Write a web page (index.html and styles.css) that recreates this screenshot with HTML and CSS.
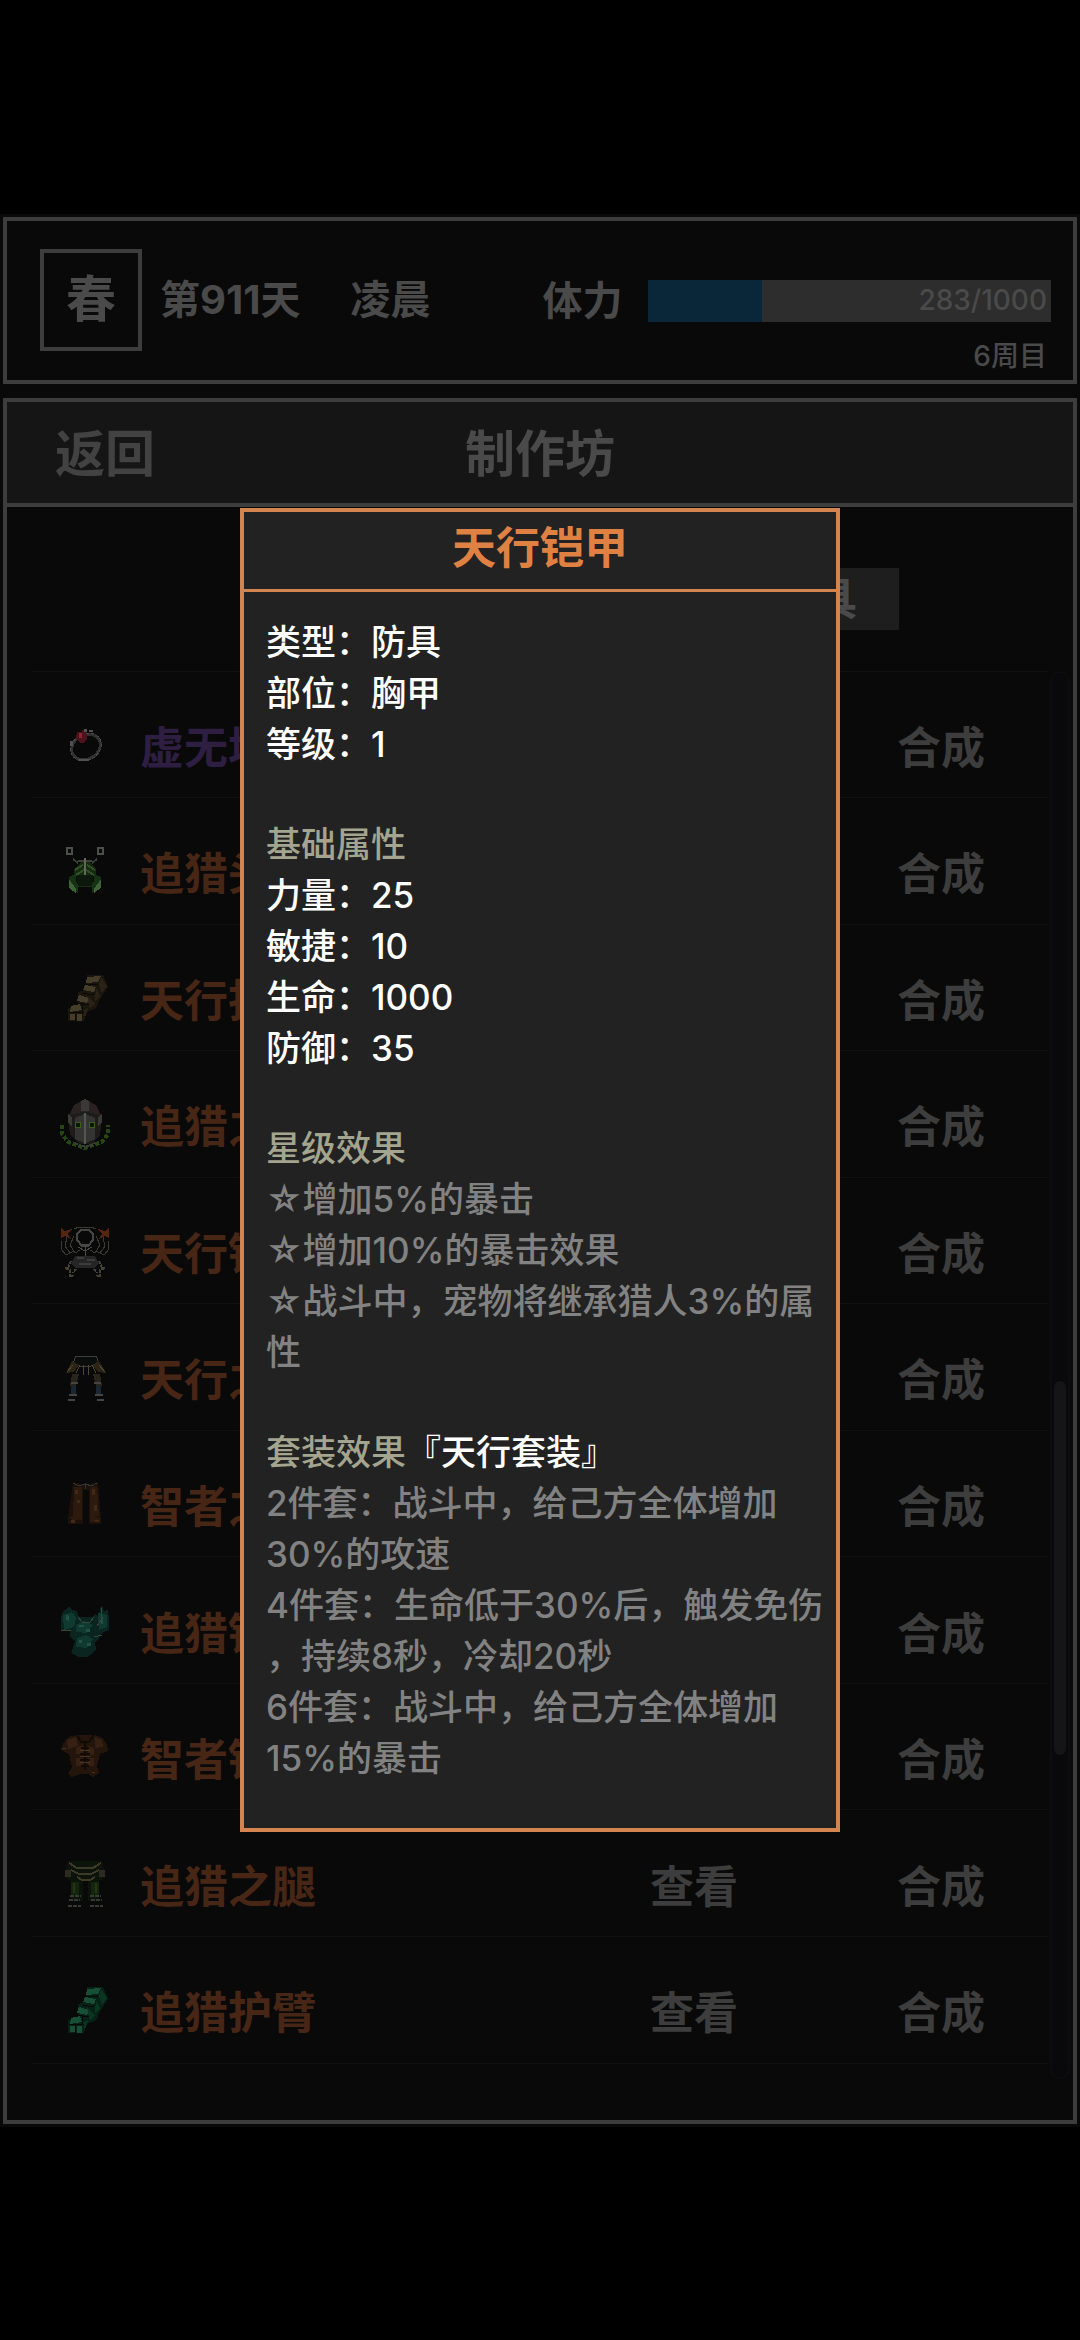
FILE: index.html
```html
<!DOCTYPE html>
<html lang="zh-CN">

<head>
    <meta charset="UTF-8">
    <meta name="viewport" content="width=device-width, initial-scale=1.0">
    <title>制作坊</title>
    <link rel="stylesheet" href="styles.css">
</head>

<body>
    <div class="stage">
        <header class="panel status">
            <div class="season">春</div>
            <div class="day">第911天</div>
            <div class="time">凌晨</div>
            <div class="stamina">
                <span class="stamina-label" id="staminaLabel">体力</span>
                <div class="bar" role="progressbar" aria-labelledby="staminaLabel" aria-valuenow="283" aria-valuemax="1000">
                    <div class="bar-fill" style="width: 28.3%"></div>
                    <span class="bar-text">283/1000</span>
                </div>
                <span class="cycle">6周目</span>
            </div>
        </header>

        <main class="panel workshop">
            <div class="title-bar">
                <button class="back">返回</button>
                <h1>制作坊</h1>
            </div>
            <div class="tabs">
                <button class="tab">防具</button>
            </div>
            <div class="list-area">
                <ul class="items">
                    <li class="item">
                        <svg class="icon" viewBox="0 0 52 52">
                            <ellipse cx="27" cy="28" rx="15" ry="12" fill="none" stroke="#303030" stroke-width="3" transform="rotate(-30 27 28)" />
                            <ellipse cx="27" cy="28" rx="16" ry="13" fill="none" stroke="#4c4a4c" stroke-width="1" stroke-dasharray="3 2" transform="rotate(-30 27 28)" />
                            <path d="M18 13h5v-2h4v4h1v5l-3 4h-4l-4-5z" fill="#4d121c" />
                            <path d="M20 14h3v5h-3z" fill="#8a2434" />
                            <path d="M25 10h3v3h-3zM30 11h4v2h-4zM11 22h3v5h-3zM20 40h10v2H20z" fill="#525052" />
                        </svg>
                        <span class="name rare">虚无境界</span>
                        <button>查看</button>
                        <button>合成</button>
                    </li>
                    <li class="item">
                        <svg class="icon" viewBox="0 0 52 52">
                            <path d="M8 3h5v6H8zM39 3h5v6h-5z" fill="#080a08" stroke="#4c504c" stroke-width="2" />
                            <path d="M14 14l5 4M38 14l-5 4M19 16h14" stroke="#3a403a" stroke-width="2" fill="none" />
                            <path d="M15 24l7-7h8l7 7v7H15z" fill="#152b12" />
                            <path d="M16 25l8-5M17 30l8-5M36 25l-8-5M35 30l-8-5" stroke="#315026" stroke-width="2" />
                            <path d="M25 13h2v20h-2z" fill="#626958" />
                            <path d="M10 32l7-3v7l3 5h12l3-5v-7l7 3v10l-9 6v-6H19v6l-9-6z" fill="#153214" />
                            <path d="M10 34l7 10v4l-7-5zM42 34l-7 10v4l7-5z" fill="#406238" />
                            <path d="M18 30h16v7l-3 4H21l-3-4z" fill="#0c180b" />
                        </svg>
                        <span class="name">追猎头饰</span>
                        <button>查看</button>
                        <button>合成</button>
                    </li>
                    <li class="item">
                        <svg class="icon" viewBox="0 0 52 52">
                            <g class="arm-bone">
                                <path class="c1" d="M28 3h16l5 12-8 12-4 9-9 4-3 9H9V36l10-3V20l7-2z" />
                                <path class="c2" d="M28 5l14-1-3 6-12 1zM26 13l11 2-2 5-11-2zM20 23l10 3-2 5-10-2zM12 34l9-2 2 6-12 2zM11 42h5v6h-5zM18 42h5v7h-5z" />
                                <path class="c3" d="M42 5l6 9-5 7-3-9zM37 16l4 8-5 5zM28 24l8 7-5 6zM24 39l5-3-3 10z" />
                                <path class="c4" d="M26 12l13 1M23 21l12 2M18 31l12 2M10 40h15M16 42v7M23 32v8" />
                            </g>
                        </svg>
                        <span class="name">天行护臂</span>
                        <button>查看</button>
                        <button>合成</button>
                    </li>
                    <li class="item">
                        <svg class="icon" viewBox="0 0 52 52">
                            <path d="M3 27v9l6 8 17 6 17-6 6-8v-9" fill="none" stroke="#264510" stroke-width="4" stroke-dasharray="4 2" />
                            <path d="M15 7l11-6 11 6 6 12-2 18-9 9H20l-9-9L9 19z" fill="#1d1c1b" />
                            <path d="M15 7l11-6 11 6 4 10-12-3h-6l-12 3z" fill="#2a2220" />
                            <path d="M22 3l4-2 4 2v10h-8z" fill="#3a3938" />
                            <path d="M9 15l4 5v9l-4-5zM43 15l-4 5v9l4-5z" fill="#3a3a38" />
                            <path d="M16 20l9-4v29l-9-4zM27 16l9 4v21l-9 4z" fill="#343433" />
                            <path d="M26 15v31" stroke="#555552" stroke-width="2" />
                            <circle cx="19" cy="27" r="3" fill="#0b1804" stroke="#3c5f11" stroke-width="1" />
                            <circle cx="33" cy="27" r="3" fill="#0b1804" stroke="#3c5f11" stroke-width="1" />
                            <path d="M16 45l5 3h10l5-3" fill="none" stroke="#3c3c3c" stroke-width="2" stroke-dasharray="3 1" />
                        </svg>
                        <span class="name">追猎之盔</span>
                        <button>查看</button>
                        <button>合成</button>
                    </li>
                    <li class="item">
                        <svg class="icon" viewBox="0 0 52 52">
                            <path d="M2 3l4 3 7-2-4 5 3 5-6-3-4 2zM50 3l-4 3-7-2 4 5-3 5 6-3 4 2z" fill="#55260d" />
                            <path d="M18 9l4-4h8l4 4v6l-5 6h-6l-5-6z" fill="none" stroke="#464644" stroke-width="2" />
                            <path d="M15 4l5-2h12l5 2M3 16l-1 8 5 6 4-2M8 12l-2 9 5 7 4-2M15 11l-4 9 5 8 5-3M49 16l1 8-5 6-4-2M44 12l2 9-5 7-4-2M37 11l4 9-5 8-5-3" fill="none" stroke="#3a3a34" stroke-width="1" />
                            <path d="M19 22l7 4 7-4M22 19h8M26 20v11" fill="none" stroke="#4a4a47" stroke-width="1" />
                            <path d="M16 31h20l4 8-5 4H17l-5-4z" fill="#252525" />
                            <path d="M18 32h7v2h-7zM28 34h8v2h-8zM20 38h12v2H20z" fill="#3c3c3c" />
                            <path d="M12 36l-3 7H6l5 2v7l4-2M40 36l3 7h3l-5 2v7l-4-2M17 44l-3 4M35 44l3 4" fill="none" stroke="#434233" stroke-width="2" stroke-dasharray="3 1" />
                        </svg>
                        <span class="name">天行铠甲</span>
                        <button>查看</button>
                        <button>合成</button>
                    </li>
                    <li class="item">
                        <svg class="icon" viewBox="0 0 52 52">
                            <path d="M14 12l3-7h20l3 7-8 3H20z" fill="#0b0c0c" stroke="#3c3c3c" stroke-width="1" />
                            <path d="M13 10l7 4-5 7-8 1zM40 10l-7 4 6 7 8 1z" fill="#2b2417" />
                            <path d="M14 14l-6 7M40 14l6 7M21 14l-4 8M33 14l4 8M24 14v10M29 14v10" stroke="#52472d" stroke-width="1" />
                            <path d="M13 23h7l-3 12h-6zM41 23h-7l3 12h6z" fill="#2a251c" />
                            <path d="M12 35h5v8h-5zM37 35h5v8h-5z" fill="#1a2733" />
                            <path d="M12 31h7v2h-7zM35 31h7v2h-7zM10 43h8v2h-8zM36 43h8v2h-8zM9 48h7v2H9zM38 48h7v2h-7z" fill="#454441" />
                        </svg>
                        <span class="name">天行之腿</span>
                        <button>查看</button>
                        <button>合成</button>
                    </li>
                    <li class="item">
                        <svg class="icon" viewBox="0 0 52 52">
                            <path d="M14 4l12 3 13-3 3 36v6H30V12h-6v34H9v-6z" fill="#1b110a" />
                            <path d="M15 9h8v29h-9zM31 9h7l2 29h-9zM11 39l12-2v5H13zM31 37l10 3v4H31z" fill="#2b1a0d" />
                            <path d="M16 12h3v4h-3zM18 22h3v3h-3zM33 11h3v6h-3zM35 27h3v6h-3zM12 42h4v3h-4zM36 42h4v2h-4z" fill="#412817" />
                            <path d="M14 5l6 3 6-2 7 2 5-3M26 5v6" fill="none" stroke="#343434" stroke-width="1" />
                        </svg>
                        <span class="name">智者之腿</span>
                        <button>查看</button>
                        <button>合成</button>
                    </li>
                    <li class="item">
                        <svg class="icon" viewBox="0 0 52 52">
                            <path d="M2 12l3-7 3-1 2-3 3 4 5 1 2 6h13l3-3 4 3 1-10 2-1 2 5 4-1 1 9v11l-7 3-3 5-4 5 1 6-4 5-5 3H20l-8-4 4-11-5-6v-5H2z" fill="#0a251f" />
                            <path d="M4 10l9-3 4 6-2 9-10 3zM39 8l9 2v12l-8 3zM17 20l8-4 9 4-6 8-11-1zM18 33l9-3 7 4-6 9-11-1z" fill="#103a2f" />
                            <path d="M7 10l3 1v5l-3-1zM42 12h2v7h-2zM20 20h5v2h-5zM27 24h4v3h-4zM20 35h3v3h-3zM28 38h4v3h-4z" fill="#1e5441" />
                            <path d="M19 12l4 5h8l4-5M2 25h10M35 32l8-2M42 3v12l-4 6" fill="none" stroke="#3b4638" stroke-width="1" />
                        </svg>
                        <span class="name">追猎铠甲</span>
                        <button>查看</button>
                        <button>合成</button>
                    </li>
                    <li class="item">
                        <svg class="icon" viewBox="0 0 52 52">
                            <path d="M4 13l5-7 9-2h18l8 3 4 7 1 6-8 3-3 12 2 7-6 4-5-3H21l-8 3-4-3 4-7-3-13-8-4z" fill="#24150c" />
                            <path d="M8 9l9-3 2 9-10 3zM36 6l7 3 1 7-8 1zM17 17l7-3v9h-7zM29 15l6 2v7h-6zM17 27h7v8h-7zM29 27h6v8h-6z" fill="#352013" />
                            <path d="M18 4l4 7h8l5-7M26 12v27M22 17h8M21 23h10M21 29h10M22 35h8" fill="none" stroke="#120a05" stroke-width="2" />
                            <path d="M21 19h10M21 25h10M21 31h10M3 17h4M33 41h3" fill="none" stroke="#4d321e" stroke-width="1" />
                        </svg>
                        <span class="name">智者铠甲</span>
                        <button>查看</button>
                        <button>合成</button>
                    </li>
                    <li class="item">
                        <svg class="icon" viewBox="0 0 52 52">
                            <path d="M9 3h34l4 16-7 4v20H29V23h-5v20H12V23l-7-4z" fill="#0c130a" />
                            <path d="M10 5l8 5h16l8-5M12 12l8 4h12l8-4M18 19l5 3h8l5-3" fill="none" stroke="#3b3b28" stroke-width="2" />
                            <path d="M6 12h6v7H6zM40 12h6v7h-6z" fill="#2d2a20" />
                            <path d="M12 24h8v13h-8zM32 24h8v13h-8z" fill="#14250e" />
                            <path d="M14 25h2v10h-2zM36 25h2v10h-2z" fill="#253616" />
                            <path d="M11 38h11M31 38h11M10 42h11M32 42h11M9 48h13M31 48h13" stroke="#383b35" stroke-width="2" stroke-dasharray="4 1" />
                        </svg>
                        <span class="name">追猎之腿</span>
                        <button>查看</button>
                        <button>合成</button>
                    </li>
                    <li class="item">
                        <svg class="icon" viewBox="0 0 52 52">
                            <g class="arm-jade">
                                <path class="c1" d="M28 3h16l5 12-8 12-4 9-9 4-3 9H9V36l10-3V20l7-2z" />
                                <path class="c2" d="M28 5l14-1-3 6-12 1zM26 13l11 2-2 5-11-2zM20 23l10 3-2 5-10-2zM12 34l9-2 2 6-12 2zM11 42h5v6h-5zM18 42h5v7h-5z" />
                                <path class="c3" d="M42 5l6 9-5 7-3-9zM37 16l4 8-5 5zM28 24l8 7-5 6zM24 39l5-3-3 10z" />
                                <path class="c4" d="M26 12l13 1M23 21l12 2M18 31l12 2M10 40h15M16 42v7M23 32v8" />
                            </g>
                        </svg>
                        <span class="name">追猎护臂</span>
                        <button>查看</button>
                        <button>合成</button>
                    </li>
                </ul>
                <div class="track">
                    <div class="thumb"></div>
                </div>
            </div>
        </main>

        <div class="overlay">
            <section class="detail" role="dialog" aria-labelledby="detailTitle">
                <h2 id="detailTitle">天行铠甲</h2>
                <div class="detail-body">
                    <div class="block">
                        类型：防具<br>
                        部位：胸甲<br>
                        等级：1
                    </div>
                    <div class="block">
                        <h3>基础属性</h3>
                        力量：25<br>
                        敏捷：10<br>
                        生命：1000<br>
                        防御：35
                    </div>
                    <div class="block inactive">
                        <h3>星级效果</h3>
                        ☆增加5%的暴击<br>
                        ☆增加10%的暴击效果<br>
                        ☆战斗中，宠物将继承猎人3%的属<br>性
                    </div>
                    <div class="block inactive">
                        <h3>套装效果<span class="set-name">『天行套装』</span></h3>
                        2件套：战斗中，给己方全体增加<br>30%的攻速<br>
                        4件套：生命低于30%后，触发免伤<br>，持续8秒，冷却20秒<br>
                        6件套：战斗中，给己方全体增加<br>15%的暴击
                    </div>
                </div>
            </section>
        </div>
    </div>
</body>

</html>
```
FILE: styles.css
```css
* {
    box-sizing: border-box;
}

body {
    margin: 0;
    min-height: 100vh;
    display: flex;
    align-items: center;
    background-color: #000;
    color: #4a4a4a;
    font-family: Inter, "Noto Sans CJK SC", sans-serif;
    font-size: 44px;
}

button {
    padding: 0;
    border: none;
    background: none;
    color: inherit;
    font: inherit;
    cursor: pointer;
}

h1,
h2,
h3 {
    margin: 0;
    font-size: inherit;
}

.stage {
    position: relative;
    flex: 1;
    display: flex;
    flex-direction: column;
    gap: 14px;
    padding: 3px;
    background-color: #090909;
}

.panel {
    border: 4px solid #3d3d3d;
}

/* top status bar */
.status {
    display: flex;
    align-items: flex-start;
    padding: 28px 22px 5px 33px;
    font-size: 40px;
    font-weight: bold;
    line-height: 102px;
}

.season {
    width: 102px;
    height: 102px;
    border: 4px solid #3d3d3d;
    font-size: 50px;
    line-height: 92px;
    text-align: center;
}

.day {
    margin-left: 18px;
}

.time {
    margin-left: 50px;
}

.stamina {
    flex: 1;
    display: grid;
    grid-template-columns: auto 1fr;
    column-gap: 26px;
    row-gap: 15px;
    margin-left: 112px;
    padding-top: 31px;
    line-height: 42px;
}

.bar {
    position: relative;
    height: 42px;
    background-color: #2d2d2d;
    font-size: 28px;
    font-weight: 500;
    line-height: 40px;
    text-align: right;
}

.bar-fill {
    position: absolute;
    top: 0;
    left: 0;
    height: 100%;
    background-color: #0a2639;
}

.bar-text {
    position: relative;
    padding-right: 4px;
}

.cycle {
    grid-column: 2;
    padding-right: 4px;
    font-size: 28px;
    font-weight: 500;
    line-height: 38px;
    text-align: right;
}

/* workshop */
.title-bar {
    display: grid;
    grid-template-columns: 1fr auto 1fr;
    align-items: center;
    height: 105px;
    padding: 0 48px 4px;
    border-bottom: 4px solid #3d3d3d;
    background-color: #151515;
    font-size: 50px;
    font-weight: bold;
}

.back {
    justify-self: start;
    color: #424242;
}

.tabs {
    display: flex;
    justify-content: flex-end;
    padding: 61px 174px 41px;
}

.tab {
    width: 172px;
    height: 62px;
    background-color: #1e1e1e;
    font-weight: bold;
    line-height: 58px;
}

.list-area {
    display: grid;
    grid-template-columns: 1fr 20px;
    gap: 2px;
    padding: 0 3px 41px 25px;
}

.items {
    display: grid;
    grid-auto-rows: 1fr;
    min-height: 1393px;
    margin: 0 0 15px;
    padding: 0;
    border-top: 1px solid #101010;
    list-style: none;
}

.item {
    display: flex;
    align-items: center;
    padding: 21px 63px 0 27px;
    border-bottom: 1px solid #101010;
    color: #3d3d3d;
    font-weight: bold;
}

.item button + button {
    margin-left: 159px;
}

.icon {
    width: 52px;
    height: 52px;
    shape-rendering: crispEdges;
}

.name {
    flex: 1;
    margin-left: 29px;
    color: #472616;
}

.name.rare {
    color: #2e1e42;
}

.arm-bone .c1 { fill: #1a160e; }
.arm-bone .c2 { fill: #463c2a; }
.arm-bone .c3 { fill: #292216; }
.arm-jade .c1 { fill: #062117; }
.arm-jade .c2 { fill: #184e36; }
.arm-jade .c3 { fill: #093521; }

.c4 {
    fill: none;
    stroke: #080a08;
    stroke-width: 1;
}

.track {
    border: 2px solid #0d0d0e;
    border-radius: 10px;
    background-color: #09090b;
}

.thumb {
    width: 12px;
    height: 374px;
    margin: 708px auto 0;
    border-radius: 6px;
    background-color: #151518;
}

/* item detail popup */
.overlay {
    position: absolute;
    inset: 0;
    display: flex;
    align-items: center;
    justify-content: center;
}

.detail {
    width: 600px;
    border: 4px solid #d4844f;
    background-color: #222;
    color: #fff;
}

.detail h2 {
    height: 80px;
    border-bottom: 3px solid #d4844f;
    color: #e08144;
    line-height: 72px;
    text-align: center;
}

.detail-body {
    padding: 25px 0 44px 22px;
    font-size: 35px;
    font-weight: 500;
    line-height: 51px;
    white-space: nowrap;
}

.block + .block {
    margin-top: 49px;
}

.block h3 {
    color: #a3a58f;
    font-weight: 500;
}

.inactive {
    color: #828282;
}

.set-name {
    color: #fff;
}
```
